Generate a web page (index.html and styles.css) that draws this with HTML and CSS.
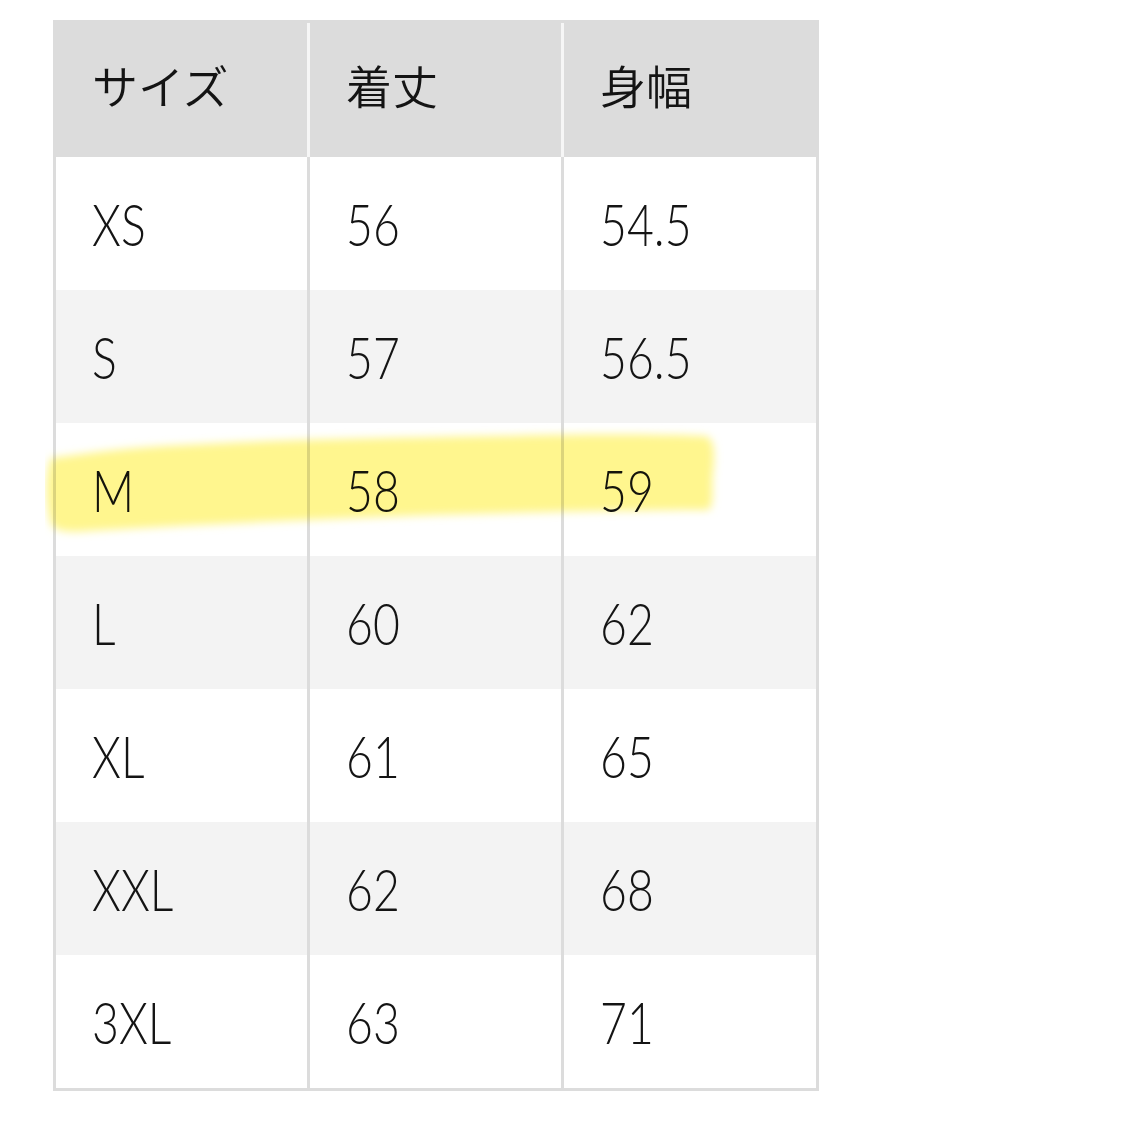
FILE: index.html
```html
<!DOCTYPE html>
<html lang="ja">
<head>
<meta charset="utf-8">
<link rel="stylesheet" href="styles.css">
</head>
<body>
<div class="wrap">
  <table class="size-table">
    <thead>
      <tr><th>サイズ</th><th>着丈</th><th>身幅</th></tr>
    </thead>
    <tbody>
      <tr><td><span class="v">XS</span></td><td><span class="v">56</span></td><td><span class="v">54.5</span></td></tr>
      <tr class="alt"><td><span class="v">S</span></td><td><span class="v">57</span></td><td><span class="v">56.5</span></td></tr>
      <tr><td><span class="v">M</span></td><td><span class="v">58</span></td><td><span class="v">59</span></td></tr>
      <tr class="alt"><td><span class="v">L</span></td><td><span class="v">60</span></td><td><span class="v">62</span></td></tr>
      <tr><td><span class="v">XL</span></td><td><span class="v">61</span></td><td><span class="v">65</span></td></tr>
      <tr class="alt"><td><span class="v">XXL</span></td><td><span class="v">62</span></td><td><span class="v">68</span></td></tr>
      <tr><td><span class="v">3XL</span></td><td><span class="v">63</span></td><td><span class="v">71</span></td></tr>
    </tbody>
  </table>
  <svg class="highlight" width="700" height="140" viewBox="0 0 700 140" aria-hidden="true">
    <defs>
      <filter id="soft" x="-5%" y="-20%" width="110%" height="140%">
        <feGaussianBlur stdDeviation="4"/>
      </filter>
    </defs>
    <path filter="url(#soft)" fill="#fff68e" d="M6 34 C 40 30, 60 26, 120 22 C 220 16, 330 14, 450 12 C 540 10, 610 10, 660 12 C 670 14, 670 30, 668 48 C 666 64, 670 78, 664 86 C 600 86, 480 88, 360 92 C 260 96, 160 100, 60 106 C 30 108, 12 110, 6 100 C 0 80, 0 50, 6 34 Z"/>
  </svg>
</div>
</body>
</html>
```
FILE: styles.css
```css
html, body {
  margin: 0;
  padding: 0;
  background: #ffffff;
}
.wrap {
  position: relative;
  padding: 20px 0 0 53px;
}
.size-table {
  border-collapse: separate;
  border-spacing: 0;
  border: 3px solid #dcdcdc;
  font-family: "Lato", "Liberation Sans", "Noto Sans CJK JP", sans-serif;
  color: #141414;
}
.size-table th,
.size-table td {
  padding: 0 0 0 36px;
  text-align: left;
  vertical-align: middle;
  box-sizing: border-box;
}
.size-table th {
  height: 134px;
  background: #dcdcdc;
  font-family: "Noto Sans CJK JP", sans-serif;
  font-weight: 350;
  font-size: 46px;
  border-left: 3px solid #f6f6f6;
  padding-bottom: 12px;
}
.size-table td {
  height: 133px;
  font-size: 58px;
  font-weight: 300;
  border-left: 3px solid #dcdcdc;
  background: #ffffff;
}
.v {
  display: inline-block;
  transform: scaleX(0.8);
  transform-origin: left center;
}
.size-table th:first-child,
.size-table td:first-child {
  border-left: none;
  width: 251px;
}
.size-table th:nth-child(2),
.size-table td:nth-child(2) {
  width: 254px;
}
.size-table th:nth-child(3),
.size-table td:nth-child(3) {
  width: 255px;
}
.size-table tr.alt td {
  background: #f3f3f3;
}
.highlight {
  position: absolute;
  left: 45px;
  top: 424px;
  mix-blend-mode: multiply;
}
```
